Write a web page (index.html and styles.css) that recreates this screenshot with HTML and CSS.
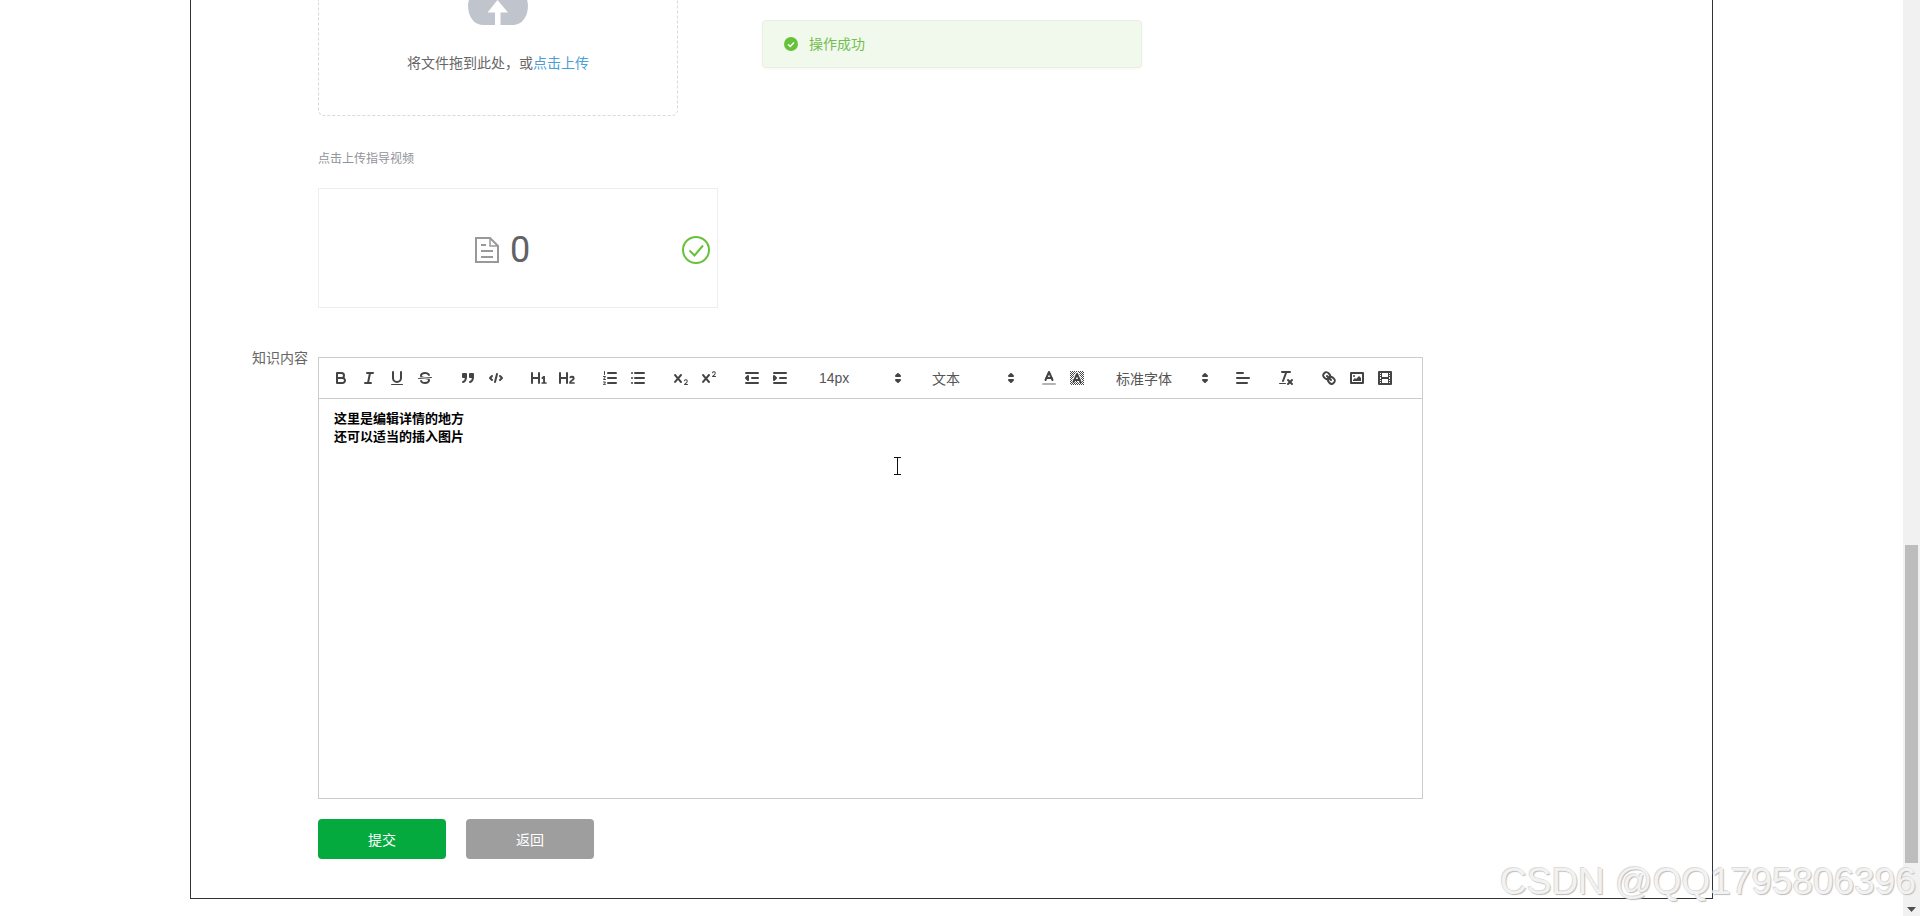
FILE: index.html
```html
<!DOCTYPE html>
<html lang="zh-CN">
<head>
<meta charset="utf-8">
<title>知识内容</title>
<link rel="stylesheet" href="styles.css">
</head>
<body>
<div class="page">
  <main class="main">
    <div class="frame">
      <div class="upload-row">
        <div class="dropzone">
          <svg class="cloud" viewBox="0 0 60 25" width="60" height="25">
            <path fill="#c0c4cc" d="M1 0C-.2 3-.3 8 1 13c2 7 7 12 14 12h30c7 0 12-5 14-12 1.300-5 1.200-10 0-13z"/>
            <path fill="#fff" d="M29.500 0L40 12.500h-7.500V25h-5.500V12.500H19.500z"/>
          </svg>
          <p class="drop-text">将文件拖到此处，或<em class="drop-link">点击上传</em></p>
        </div>
        <div class="alert">
          <svg class="alert-icon" viewBox="0 0 14 14" width="14" height="14">
            <circle cx="7" cy="7" r="7" fill="#67c23a"/>
            <path d="M4 7.200l2.200 2.200L10 5.400" fill="none" stroke="#fff" stroke-width="1.400"/>
          </svg>
          <span class="alert-text">操作成功</span>
        </div>
      </div>
      <p class="hint">点击上传指导视频</p>
      <div class="video-card">
        <svg class="doc-icon" viewBox="0 0 24 26" width="24" height="26">
          <path d="M1 1h14l8 8v16H1z" fill="none" stroke="#999" stroke-width="2"/>
          <path d="M15 1v8h8" fill="none" stroke="#999" stroke-width="1.500"/>
          <path d="M6 8h5M6 14h12M6 20h12" stroke="#999" stroke-width="1.800"/>
        </svg>
        <span class="count">0</span>
        <svg class="ok-icon" viewBox="0 0 28 28" width="28" height="28">
          <circle cx="14" cy="14" r="13" fill="none" stroke="#67c23a" stroke-width="2"/>
          <path d="M7.500 14.500l5 5 8.500-10" fill="none" stroke="#67c23a" stroke-width="2"/>
        </svg>
      </div>

      <div class="form-item">
        <label class="form-label">知识内容</label>
        <div class="form-body">
          <div class="editor">
            <div class="toolbar">
              <span class="formats">
                <button class="tool"><svg viewBox="0 0 18 18"><path class="s" d="M5,4H9.500A2.500,2.500,0,0,1,12,6.500v0A2.500,2.500,0,0,1,9.500,9H5A0,0,0,0,1,5,9V4A0,0,0,0,1,5,4Z"/><path class="s" d="M5,9h5.500A2.500,2.500,0,0,1,13,11.500v0A2.500,2.500,0,0,1,10.500,14H5a0,0,0,0,1,0,0V9A0,0,0,0,1,5,9Z"/></svg></button>
                <button class="tool"><svg viewBox="0 0 18 18"><line class="s" x1="7" x2="13" y1="4" y2="4"/><line class="s" x1="5" x2="11" y1="14" y2="14"/><line class="s" x1="8" x2="10" y1="14" y2="4"/></svg></button>
                <button class="tool"><svg viewBox="0 0 18 18"><path class="s" d="M5,3V9a4.012,4.012,0,0,0,4,4H9a4.012,4.012,0,0,0,4-4V3"/><rect class="f" height="1" rx="0.500" ry="0.500" width="12" x="3" y="15"/></svg></button>
                <button class="tool"><svg viewBox="0 0 18 18"><line class="s thin" x1="15.500" x2="2.500" y1="8.500" y2="9.500"/><path class="f" d="M9.007,8C6.542,7.791,6,7.519,6,6.500,6,5.792,7.283,5,9,5c1.571,0,2.765.679,2.969,1.309a1,1,0,0,0,1.900-.617C13.356,4.106,11.354,3,9,3,6.200,3,4,4.538,4,6.500a3.200,3.200,0,0,0,.5,1.843Z"/><path class="f" d="M8.984,10C11.457,10.208,12,10.479,12,11.500c0,.708-1.283,1.500-3,1.500-1.571,0-2.765-.679-2.969-1.309a1,1,0,1,0-1.900.617C4.644,13.894,6.646,15,9,15c2.800,0,5-1.538,5-3.500a3.200,3.200,0,0,0-.5-1.843Z"/></svg></button>
              </span>
              <span class="formats">
                <button class="tool"><svg viewBox="0 0 18 18"><rect class="s f" height="3" width="3" x="4" y="5"/><rect class="s f" height="3" width="3" x="11" y="5"/><path class="s" d="M7,8c0,4.031-3,5-3,5"/><path class="s" d="M14,8c0,4.031-3,5-3,5"/></svg></button>
                <button class="tool"><svg viewBox="0 0 18 18"><polyline class="s" points="5 7 3 9 5 11"/><polyline class="s" points="13 7 15 9 13 11"/><line class="s" x1="10" x2="8" y1="5" y2="13"/></svg></button>
              </span>
              <span class="formats">
                <button class="tool"><svg viewBox="0 0 18 18"><path class="f" d="M10,4V14a1,1,0,0,1-2,0V10H3v4a1,1,0,0,1-2,0V4A1,1,0,0,1,3,4V8H8V4a1,1,0,0,1,2,0Zm6.068,9.209H14.990V7.599a.541.541,0,0,0-.605-.605h-.627a1.011,1.011,0,0,0-.748.297L11.645,8.566a.544.544,0,0,0-.022.858l.286.308a.539.539,0,0,0,.847.033l.099-.088a1.214,1.214,0,0,0,.242-.353h.022s-.011.309-.011.605V13.209H12.041a.541.541,0,0,0-.605.605v.439a.541.541,0,0,0,.605.605h4.027a.541.541,0,0,0,.605-.605v-.439A.541.541,0,0,0,16.068,13.209Z"/></svg></button>
                <button class="tool"><svg viewBox="0 0 18 18"><path class="f" d="M16.740,13.814v.439a.541.541,0,0,1-.605.605H11.855a.584.584,0,0,1-.649-.605V14.013c0-2.905,3.399-3.422,3.399-4.555a.777.777,0,0,0-.847-.781,1.177,1.177,0,0,0-.836.385c-.275.264-.561.374-.858.132l-.429-.341c-.308-.242-.385-.518-.154-.814a2.972,2.972,0,0,1,2.454-1.177,2.454,2.454,0,0,1,2.684,2.409c0,2.453-3.179,2.927-3.278,3.938h2.794A.541.541,0,0,1,16.740,13.814ZM9,3A1,1,0,0,0,8,4V8H3V4A1,1,0,0,0,1,4V14a1,1,0,0,0,2,0V10H8v4a1,1,0,0,0,2,0V4A1,1,0,0,0,9,3Z"/></svg></button>
              </span>
              <span class="formats">
                <button class="tool"><svg viewBox="0 0 18 18"><line class="s" x1="7" x2="15" y1="4" y2="4"/><line class="s" x1="7" x2="15" y1="9" y2="9"/><line class="s" x1="7" x2="15" y1="14" y2="14"/><path class="s thin" d="M3.500 2.500v3M2.500 7.500h2l-2 3h2M2.500 13h2l-1 1.200 1 1.200h-2"/></svg></button>
                <button class="tool"><svg viewBox="0 0 18 18"><line class="s" x1="6" x2="15" y1="4" y2="4"/><line class="s" x1="6" x2="15" y1="9" y2="9"/><line class="s" x1="6" x2="15" y1="14" y2="14"/><line class="s" x1="3" x2="3" y1="4" y2="4"/><line class="s" x1="3" x2="3" y1="9" y2="9"/><line class="s" x1="3" x2="3" y1="14" y2="14"/></svg></button>
              </span>
              <span class="formats">
                <button class="tool"><svg viewBox="0 0 18 18"><path class="f" d="M15.500,15H13.861a3.858,3.858,0,0,0,1.914-2.975,1.800,1.800,0,0,0-1.600-1.751A1.921,1.921,0,0,0,12.021,11.700a.5.5,0,1,0,.957.291h0a.914.914,0,0,1,1.053-.725.81.81,0,0,1,.744.762c0,1.076-1.170,1.870-1.940,2.431A1.456,1.456,0,0,0,12,15.500a.5.5,0,0,0,.5.5h3A.5.5,0,0,0,15.500,15Z"/><path class="f" d="M9.650,5.241a1,1,0,0,0-1.409.108L6,7.964,3.759,5.349A1,1,0,0,0,2.289,6.703L4.684,9.500,2.289,12.297A1,1,0,0,0,3.799,13.604L6,11.036,8.241,13.651a1,1,0,1,0,1.519-1.302L7.316,9.500,9.760,6.651A1,1,0,0,0,9.650,5.241Z"/></svg></button>
                <button class="tool"><svg viewBox="0 0 18 18"><path class="f" d="M15.500,7H13.861a4.015,4.015,0,0,0,1.914-2.975,1.800,1.800,0,0,0-1.600-1.751A1.922,1.922,0,0,0,12.021,3.700a.5.5,0,1,0,.957.291.917.917,0,0,1,1.053-.725.81.81,0,0,1,.744.762c0,1.077-1.164,1.925-1.934,2.486A1.423,1.423,0,0,0,12,7.500a.5.5,0,0,0,.5.5h3A.5.5,0,0,0,15.500,7Z"/><path class="f" d="M9.650,5.241a1,1,0,0,0-1.409.108L6,7.964,3.759,5.349A1,1,0,0,0,2.289,6.703L4.684,9.500,2.289,12.297A1,1,0,0,0,3.799,13.604L6,11.036,8.241,13.651a1,1,0,1,0,1.519-1.302L7.316,9.500,9.760,6.651A1,1,0,0,0,9.650,5.241Z"/></svg></button>
              </span>
              <span class="formats">
                <button class="tool"><svg viewBox="0 0 18 18"><line class="s" x1="3" x2="15" y1="14" y2="14"/><line class="s" x1="3" x2="15" y1="4" y2="4"/><line class="s" x1="9" x2="15" y1="9" y2="9"/><polyline class="s f" points="5 7 5 11 3 9 5 7"/></svg></button>
                <button class="tool"><svg viewBox="0 0 18 18"><line class="s" x1="3" x2="15" y1="14" y2="14"/><line class="s" x1="3" x2="15" y1="4" y2="4"/><line class="s" x1="9" x2="15" y1="9" y2="9"/><polyline class="s f" points="3 7 3 11 5 9 3 7"/></svg></button>
              </span>
              <span class="formats">
                <span class="picker w98"><span>14px</span><svg viewBox="0 0 18 18"><polygon class="s" points="7 11 9 13 11 11 7 11"/><polygon class="s" points="7 7 9 5 11 7 7 7"/></svg></span>
              </span>
              <span class="formats">
                <span class="picker w98"><span>文本</span><svg viewBox="0 0 18 18"><polygon class="s" points="7 11 9 13 11 11 7 11"/><polygon class="s" points="7 7 9 5 11 7 7 7"/></svg></span>
              </span>
              <span class="formats">
                <button class="tool"><svg viewBox="0 0 18 18"><line class="s faded" x1="3" x2="15" y1="15" y2="15"/><polyline class="s" points="5.500 11 9 3 12.500 11"/><line class="s" x1="11.630" x2="6.380" y1="9" y2="9"/></svg></button>
                <button class="tool"><svg viewBox="0 0 18 18"><defs><pattern id="hatch" width="2" height="2" patternUnits="userSpaceOnUse"><rect width="1" height="1" fill="#444"/><rect x="1" y="1" width="1" height="1" fill="#444"/></pattern></defs><path d="M2 2h14v14H2z" fill="url(#hatch)"/><polyline class="halo" points="5.500 13 9 5 12.500 13"/><polyline class="s" points="5.500 13 9 5 12.500 13"/><line class="s" x1="11.630" x2="6.380" y1="11" y2="11"/></svg></button>
              </span>
              <span class="formats">
                <span class="picker w108"><span>标准字体</span><svg viewBox="0 0 18 18"><polygon class="s" points="7 11 9 13 11 11 7 11"/><polygon class="s" points="7 7 9 5 11 7 7 7"/></svg></span>
              </span>
              <span class="formats">
                <button class="tool"><svg viewBox="0 0 18 18"><line class="s" x1="3" x2="15" y1="9" y2="9"/><line class="s" x1="3" x2="13" y1="14" y2="14"/><line class="s" x1="3" x2="9" y1="4" y2="4"/></svg></button>
              </span>
              <span class="formats">
                <button class="tool"><svg viewBox="0 0 18 18"><line class="s" x1="5" x2="13" y1="3" y2="3"/><line class="s" x1="6" x2="9.350" y1="12" y2="3"/><line class="s" x1="11" x2="15" y1="11" y2="15"/><line class="s" x1="15" x2="11" y1="11" y2="15"/><rect class="f" height="1" rx="0.500" ry="0.500" width="7" x="2" y="14"/></svg></button>
              </span>
              <span class="formats">
                <button class="tool"><svg viewBox="0 0 18 18"><line class="s" x1="7" x2="11" y1="7" y2="11"/><path class="s" d="M8.900,4.577a3.476,3.476,0,0,1,.36,4.679A3.476,3.476,0,0,1,4.577,8.900C3.185,7.500,2.035,6.400,4.217,4.217S7.500,3.185,8.900,4.577Z"/><path class="s" d="M13.423,9.100a3.476,3.476,0,0,0-4.679-.36,3.476,3.476,0,0,0,.36,4.679c1.392,1.392,2.500,2.542,4.679.36S14.815,10.500,13.423,9.100Z"/></svg></button>
                <button class="tool"><svg viewBox="0 0 18 18"><rect class="s" height="10" width="12" x="3" y="4"/><circle class="f" cx="6" cy="7" r="1"/><polyline class="f" points="5 12 5 11 7 9 8 10 11 7 13 9 13 12 5 12"/></svg></button>
                <button class="tool"><svg viewBox="0 0 18 18"><rect class="s" height="12" width="12" x="3" y="3"/><rect class="f" height="12" width="1" x="5" y="3"/><rect class="f" height="12" width="1" x="12" y="3"/><rect class="f" height="2" width="8" x="5" y="8"/><rect class="f" height="1" width="3" x="3" y="5"/><rect class="f" height="1" width="3" x="3" y="7"/><rect class="f" height="1" width="3" x="3" y="10"/><rect class="f" height="1" width="3" x="3" y="12"/><rect class="f" height="1" width="3" x="12" y="5"/><rect class="f" height="1" width="3" x="12" y="7"/><rect class="f" height="1" width="3" x="12" y="10"/><rect class="f" height="1" width="3" x="12" y="12"/></svg></button>
              </span>
            </div>
            <div class="content">
              <p>这里是编辑详情的地方</p>
              <p>还可以适当的插入图片</p>
              <svg class="ibeam" viewBox="0 0 9 18" width="9" height="18"><path d="M1 .5h7M1 17.500h7M4.500 .5v17" fill="none" stroke="#111" stroke-width="1"/></svg>
            </div>
          </div>
          <div class="actions">
            <button class="btn btn-primary">提交</button>
            <button class="btn btn-muted">返回</button>
          </div>
        </div>
      </div>
    </div>
    <div class="watermark">CSDN @QQ1795806396</div>
  </main>
  <div class="scrollbar">
    <div class="thumb"></div>
    <svg class="arrow" viewBox="0 0 9 5" width="9" height="5"><path d="M0 0h9L4.500 5z" fill="#505050"/></svg>
  </div>
</div>
</body>
</html>
```

FILE: styles.css
```css
* { box-sizing: border-box; }
html, body { margin: 0; padding: 0; background: #fff; }
body { font-family: "Liberation Sans", "Noto Sans CJK SC", sans-serif; font-size: 14px; color: #606266; }
p { margin: 0; }
button { font: inherit; }

.page { display: flex; height: 916px; overflow: hidden; }
.main { position: relative; flex: 1; min-width: 0; padding-left: 190px; }
.frame {
  width: 1523px;
  height: 899px;
  padding-left: 61px;
  border: 1px solid #333;
  border-top: none;
  overflow: hidden;
}

.upload-row { display: flex; align-items: flex-start; margin-left: 66px; }
.dropzone {
  width: 360px;
  height: 116px;
  border: 1px dashed #d9d9d9;
  border-top: none;
  border-radius: 0 0 6px 6px;
  text-align: center;
}
.cloud { display: block; margin: 0 auto 28px; }
.drop-text { line-height: 20px; font-size: 14px; color: #666; }
.drop-link { font-style: normal; color: #4b9fd5; }

.alert {
  display: flex;
  align-items: center;
  gap: 11px;
  width: 380px;
  height: 48px;
  margin: 20px 0 0 84px;
  padding-left: 21px;
  background: #f0f9eb;
  border: 1px solid #e9efe2;
  border-radius: 4px;
  box-shadow: 0 1px 3px rgba(0, 0, 0, .04);
  color: #74bd52;
  font-size: 14px;
}
.alert-icon { flex: none; }
.alert-text { padding-bottom: 2px; }

.hint { margin: 33px 0 0 66px; font-size: 12px; line-height: 20px; color: #909399; }
.video-card {
  display: flex;
  align-items: center;
  width: 400px;
  height: 120px;
  margin: 19px 0 0 66px;
  padding: 3px 7px 0 156px;
  border: 1px solid #ebeef5;
}
.doc-icon { flex: none; }
.count { margin-left: 11px; font-family: Roboto, sans-serif; font-size: 36px; line-height: 40px; color: #606266; }
.ok-icon { flex: none; margin-left: auto; }

.form-item { display: flex; align-items: flex-start; margin-top: 40px; }
.form-label { flex: none; width: 66px; padding-right: 10px; line-height: 20px; text-align: right; white-space: nowrap; font-size: 14px; color: #666; }
.form-body { flex: none; width: 1105px; margin-top: 9px; }

.editor { height: 442px; border: 1px solid #ccc; display: flex; flex-direction: column; }
.toolbar { display: flex; flex: none; height: 41px; padding: 8px; border-bottom: 1px solid #ccc; }
.formats { display: inline-flex; margin-right: 15px; }
.tool { display: block; width: 28px; height: 24px; padding: 3px 5px; border: 0; background: none; }
.tool svg { display: block; width: 18px; height: 18px; }
.s { fill: none; stroke: #444; stroke-width: 2; stroke-linecap: round; stroke-linejoin: round; }
.f { fill: #444; }
.s.f { fill: #444; }
.thin { stroke-width: 1; }
.faded { opacity: .4; }
.halo { fill: none; stroke: #fff; stroke-width: 4; stroke-linejoin: round; }

.picker { display: flex; align-items: center; justify-content: space-between; height: 24px; color: #555; font-size: 14px; padding-left: 10px; }
.w98 { width: 98px; }
.w108 { width: 108px; padding-left: 10px; }
.picker svg { width: 18px; height: 18px; flex: none; }

.content { position: relative; flex: 1; padding: 11px 15px; color: #000; font-size: 13px; font-weight: 700; line-height: 18px; }
.ibeam { position: absolute; left: 574px; top: 58px; }

.actions { display: flex; gap: 20px; margin-top: 20px; }
.btn { width: 128px; height: 40px; border: 0; border-radius: 4px; color: #fff; font-size: 14px; }
.btn-primary { background: #05aa3f; }
.btn-muted { background: #9e9e9e; }

.watermark {
  position: absolute;
  right: -13px;
  bottom: 14px;
  font-family: "Liberation Sans", sans-serif;
  font-size: 37px;
  line-height: 40px;
  color: #f2f2f2;
  text-shadow: 1px 1px 1px #bcbcbc, -1px -1px 0 #dcdcdc;
  white-space: nowrap;
}

.scrollbar { display: flex; flex-direction: column; align-items: center; flex: none; width: 17px; padding-top: 545px; background: #f1f1f1; }
.thumb { width: 13px; height: 318px; background: #bdbdbd; }
.arrow { display: block; margin-top: 44px; }
```
